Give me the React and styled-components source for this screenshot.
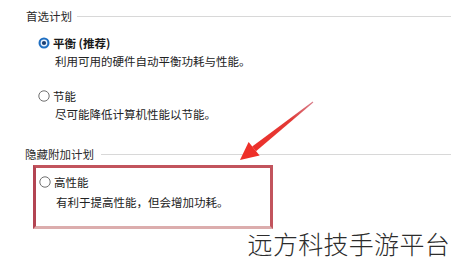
import React from "react";
import styled, { createGlobalStyle } from "styled-components";

const Global = createGlobalStyle`
  html, body { margin: 0; padding: 0; background: #ffffff; }
  body { font-family: "Noto Sans CJK SC", "Noto Sans", sans-serif; }
`;

const Page = styled.div`
  position: relative;
  width: 451px;
  height: 263px;
  overflow: hidden;
  background: #ffffff;
  color: #1c1c1c;
  font-size: 11.5px;
`;

const Header = styled.div`
  display: flex;
  align-items: center;
  gap: ${(p) => p.$gap}px;
  height: 18px;
  margin-top: ${(p) => p.$top}px;
  padding-left: ${(p) => p.$left}px;
  color: #2a2a2a;
  line-height: 18px;
  white-space: nowrap;
`;

const Rule = styled.div`
  flex: 1;
  height: 1px;
  background: #d8d8d8;
`;

const Option = styled.div`
  display: flex;
  flex-direction: column;
  margin-top: ${(p) => p.$top}px;
  padding-left: ${(p) => p.$left}px;
`;

const Row = styled.div`
  display: flex;
  align-items: center;
  gap: 3px;
  height: 18px;
  line-height: 18px;
  font-weight: ${(p) => (p.$bold ? 700 : 400)};
  color: #1a1a1a;
  white-space: nowrap;
`;

const Desc = styled.div`
  height: 18px;
  line-height: 18px;
  margin-top: ${(p) => p.$top || 0}px;
  padding-left: 17px;
  color: #222;
  white-space: nowrap;
`;

const HighlightBox = styled.div`
  box-sizing: border-box;
  width: 240px;
  height: 64px;
  margin-top: 2px;
  margin-left: 33px;
  padding: 5px 0 0 3px;
  border: 3px solid #c2545d;
  border-bottom-color: #dcadad;
  border-left-color: #b34452;
`;

const Overlay = styled.svg`
  position: absolute;
  left: 0;
  top: 0;
  pointer-events: none;
`;

const Watermark = styled.div`
  position: absolute;
  right: 1px;
  bottom: 6px;
  font-size: 25px;
  font-weight: 300;
  line-height: 28px;
  color: #2c2c2c;
  letter-spacing: 0.3px;
  white-space: nowrap;
`;

function Radio({ checked }) {
  return (
    <svg width="12" height="12" viewBox="0 0 12 12">
      {checked ? (
        <>
          <circle cx="6" cy="6" r="5.5" fill="#1f6fc2" />
          <circle cx="6" cy="6" r="3.4" fill="#e9f1fb" />
          <circle cx="6" cy="6" r="2.1" fill="#1a3f73" />
        </>
      ) : (
        <circle cx="6" cy="6" r="5.2" fill="#fff" stroke="#707070" strokeWidth="1" />
      )}
    </svg>
  );
}

export default function App() {
  return (
    <>
      <Global />
      <Page>
        <Header $top={7} $left={26} $gap={5}>
          <span>首选计划</span>
          <Rule />
        </Header>

        <Option $top={9} $left={38}>
          <Row $bold>
            <Radio checked />
            <span>平衡 (推荐)</span>
          </Row>
          <Desc>利用可用的硬件自动平衡功耗与性能。</Desc>
        </Option>

        <Option $top={17} $left={38}>
          <Row>
            <Radio />
            <span>节能</span>
          </Row>
          <Desc>尽可能降低计算机性能以节能。</Desc>
        </Option>

        <Header $top={22} $left={25} $gap={7}>
          <span>隐藏附加计划</span>
          <Rule />
        </Header>

        <HighlightBox>
          <Option $top={0} $left={0}>
            <Row>
              <Radio />
              <span>高性能</span>
            </Row>
            <Desc $top={2}>有利于提高性能，但会增加功耗。</Desc>
          </Option>
        </HighlightBox>

        <Overlay width="451" height="263" viewBox="0 0 451 263">
          <defs>
            <linearGradient id="arrowGrad" x1="313" y1="102" x2="250" y2="152" gradientUnits="userSpaceOnUse">
              <stop offset="0" stopColor="#c9485a" stopOpacity="0.7" />
              <stop offset="0.35" stopColor="#e23a36" />
              <stop offset="1" stopColor="#ee2f2a" />
            </linearGradient>
          </defs>
          <polygon
            points="313.3,102.4 312.7,101.6 252.2,146.4 256,151.2"
            fill="url(#arrowGrad)"
          />
          <polygon points="240,160 248.6,142 259.6,155.6" fill="#ee3029" />
        </Overlay>

        <Watermark>远方科技手游平台</Watermark>
      </Page>
    </>
  );
}
